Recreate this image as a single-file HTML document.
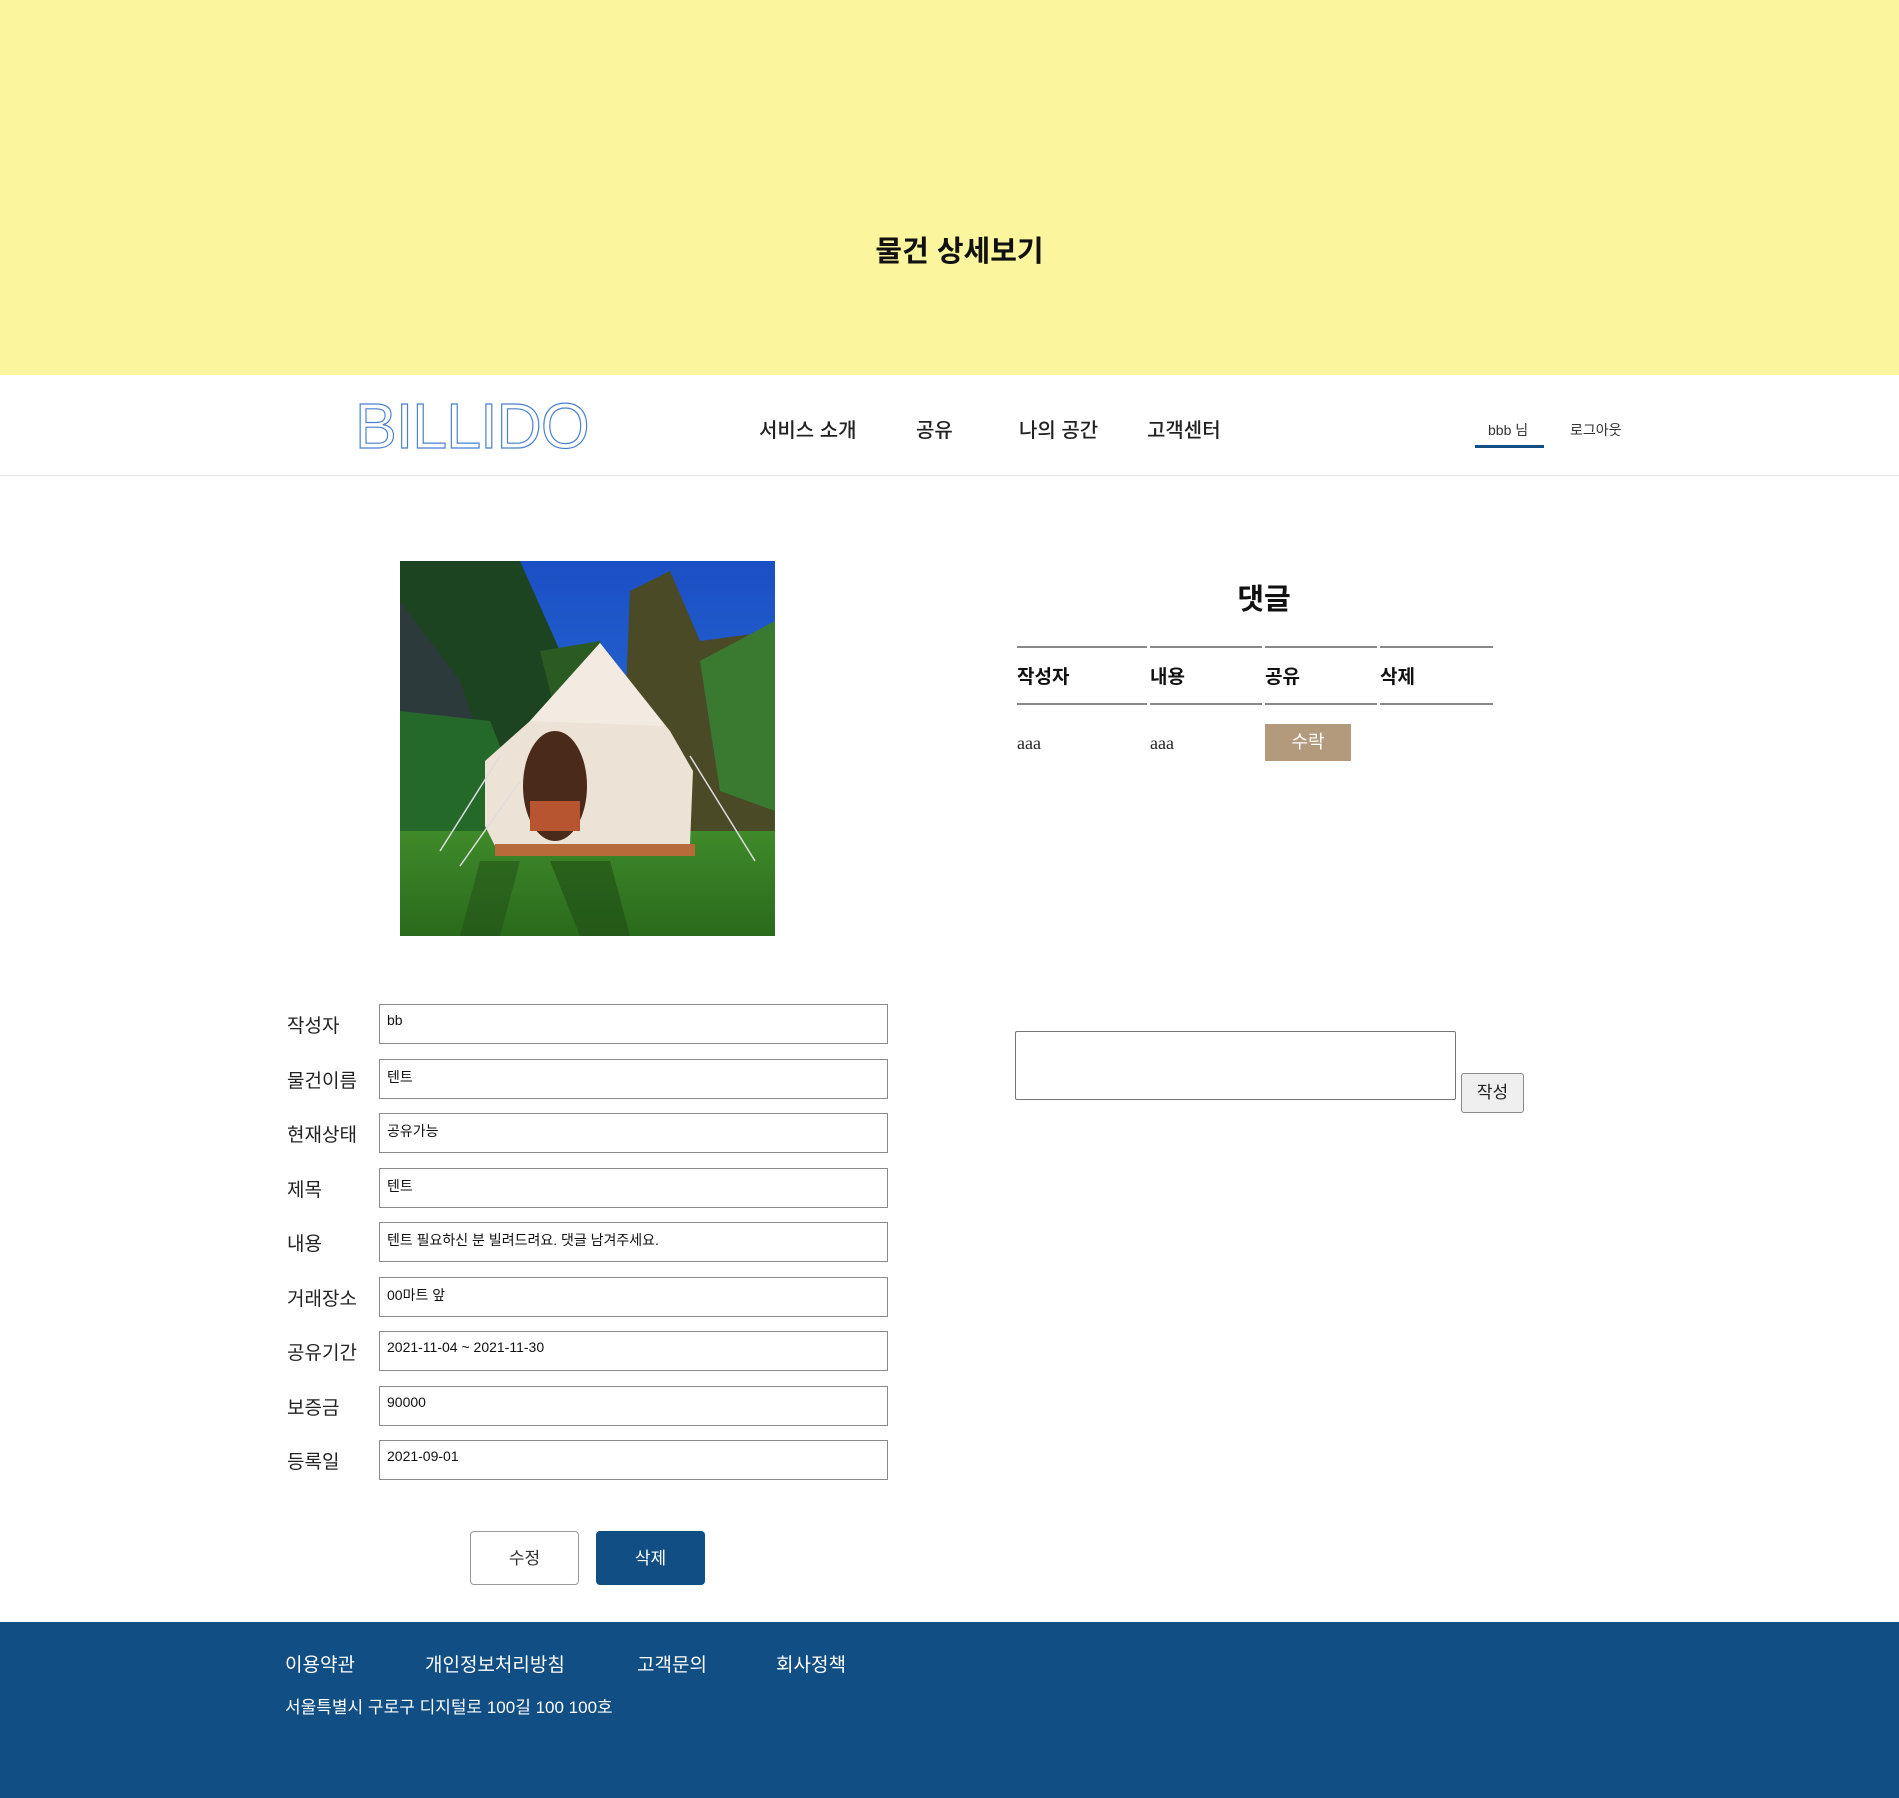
<!DOCTYPE html>
<html><head><meta charset="utf-8">
<style>
*{margin:0;padding:0;box-sizing:border-box}
body{width:1899px;height:1798px;position:relative;background:#fff;font-family:"Liberation Sans","Noto Sans CJK KR",sans-serif;color:#222;overflow:hidden}
.abs{position:absolute}
.top{left:0;top:0;width:1899px;height:375px;background:#fbf69d}
.title{left:10px;width:1899px;top:228px;text-align:center;font-size:29px;font-weight:700;color:#111}
.hdr{left:0;top:375px;width:1899px;height:101px;border-bottom:1px solid #e4e4e4}
.logo{left:355px;top:386px;font-family:"Liberation Sans",sans-serif;font-size:64px;line-height:80px;color:#fff;-webkit-text-stroke:1.2px #4a80d0;transform:scaleX(0.98);transform-origin:left;letter-spacing:-1px}
.nav{top:414px;font-size:20px;font-weight:500;color:#222;white-space:nowrap}
.small{top:420px;font-size:14px;color:#333}
.lbl{left:287px;font-size:19px;color:#222}
.inp{left:379px;width:509px;height:40px;border:1px solid #8a8a8a;font-size:14px;padding:7px 0 0 7px;color:#111}
.th{top:662px;font-size:19px;font-weight:700;color:#111}
.ln{height:2px;background:#888}
.foot{left:0;top:1622px;width:1899px;height:176px;background:#104e84;color:#fff}
.fl{top:1650px;font-size:19px;color:#fff}
</style></head><body>
<div class="abs top"></div>
<div class="abs title">물건 상세보기</div>
<div class="abs hdr"></div>
<div class="abs logo">BILLIDO</div>
<div class="abs nav" style="left:759px">서비스 소개</div>
<div class="abs nav" style="left:916px">공유</div>
<div class="abs nav" style="left:1019px">나의 공간</div>
<div class="abs nav" style="left:1147px">고객센터</div>
<div class="abs small" style="left:1488px">bbb 님</div>
<div class="abs" style="left:1475px;top:445px;width:69px;height:3px;background:#104e84"></div>
<div class="abs small" style="left:1570px">로그아웃</div>

<svg class="abs" style="left:400px;top:561px" width="375" height="375" viewBox="0 0 375 375">
<defs>
<linearGradient id="sky" x1="0" y1="0" x2="0" y2="1"><stop offset="0" stop-color="#1b4fc4"/><stop offset="1" stop-color="#2f7ee0"/></linearGradient>
<linearGradient id="grass" x1="0" y1="0" x2="0" y2="1"><stop offset="0" stop-color="#3f8a2a"/><stop offset="1" stop-color="#2a6a1c"/></linearGradient>
</defs>
<rect width="375" height="375" fill="url(#sky)"/>
<path d="M0 0 L120 0 L160 90 L185 240 L0 300Z" fill="#1d4420"/>
<path d="M0 40 L60 120 L80 180 L0 200Z" fill="#2c3a3c"/>
<path d="M0 150 L90 160 L130 260 L0 300Z" fill="#24692a"/>
<path d="M230 30 L270 10 L300 80 L375 70 L375 300 L220 280Z" fill="#4a4a26"/>
<path d="M300 100 L375 60 L375 250 L320 230Z" fill="#3a7a30"/>
<path d="M140 90 L200 80 L230 160 L160 170Z" fill="#2b5a22"/>
<rect y="270" width="375" height="105" fill="url(#grass)"/>
<path d="M150 300 L180 375 L230 375 L210 300Z" fill="#1f4d16" opacity=".6"/>
<path d="M80 300 L60 375 L100 375 L120 300Z" fill="#1f4d16" opacity=".5"/>
<path d="M200 82 L130 160 L85 200 L85 265 L95 285 L265 293 L290 283 L293 210 L270 170Z" fill="#ede2d6"/>
<path d="M200 82 L130 160 L265 165Z" fill="#f3ebe2"/>
<rect x="95" y="283" width="200" height="12" fill="#b86b3a"/>
<ellipse cx="155" cy="225" rx="32" ry="55" fill="#4a2a1a"/>
<rect x="130" y="240" width="50" height="30" fill="#b75530"/>
<path d="M100 195 L40 290 M290 195 L355 300 M120 220 L60 305" stroke="#ddd" stroke-width="1.5"/>
</svg>

<div class="abs" style="left:0;width:2528px;top:576px;font-size:29px;font-weight:700;color:#111;text-align:center">댓글</div>
<div class="abs ln" style="left:1017px;top:646px;width:130px"></div>
<div class="abs ln" style="left:1150px;top:646px;width:112px"></div>
<div class="abs ln" style="left:1265px;top:646px;width:112px"></div>
<div class="abs ln" style="left:1380px;top:646px;width:113px"></div>
<div class="abs ln" style="left:1017px;top:703px;width:130px"></div>
<div class="abs ln" style="left:1150px;top:703px;width:112px"></div>
<div class="abs ln" style="left:1265px;top:703px;width:112px"></div>
<div class="abs ln" style="left:1380px;top:703px;width:113px"></div>
<div class="abs th" style="left:1017px">작성자</div>
<div class="abs th" style="left:1150px">내용</div>
<div class="abs th" style="left:1265px">공유</div>
<div class="abs th" style="left:1380px">삭제</div>
<div class="abs" style="left:1017px;top:733px;font-size:18px;font-family:'Liberation Serif',serif">aaa</div>
<div class="abs" style="left:1150px;top:733px;font-size:18px;font-family:'Liberation Serif',serif">aaa</div>
<div class="abs" style="left:1265px;top:724px;width:86px;height:37px;background:#b39a7c;color:#fff;font-size:18px;text-align:center;line-height:37px">수락</div>

<div class="abs" style="left:1015px;top:1031px;width:441px;height:69px;border:1px solid #767676;border-radius:2px"></div>
<div class="abs" style="left:1461px;top:1073px;width:63px;height:40px;border:1px solid #8a8a8a;border-radius:3px;background:#efefef;font-size:17px;text-align:center;line-height:38px">작성</div>

<div class="abs lbl" style="top:1011px">작성자</div><div class="abs inp" style="top:1004px">bb</div>
<div class="abs lbl" style="top:1066px">물건이름</div><div class="abs inp" style="top:1059px">텐트</div>
<div class="abs lbl" style="top:1120px">현재상태</div><div class="abs inp" style="top:1113px">공유가능</div>
<div class="abs lbl" style="top:1175px">제목</div><div class="abs inp" style="top:1168px">텐트</div>
<div class="abs lbl" style="top:1229px">내용</div><div class="abs inp" style="top:1222px">텐트 필요하신 분 빌려드려요. 댓글 남겨주세요.</div>
<div class="abs lbl" style="top:1284px">거래장소</div><div class="abs inp" style="top:1277px">00마트 앞</div>
<div class="abs lbl" style="top:1338px">공유기간</div><div class="abs inp" style="top:1331px">2021-11-04 ~ 2021-11-30</div>
<div class="abs lbl" style="top:1393px">보증금</div><div class="abs inp" style="top:1386px">90000</div>
<div class="abs lbl" style="top:1447px">등록일</div><div class="abs inp" style="top:1440px">2021-09-01</div>

<div class="abs" style="left:470px;top:1531px;width:109px;height:54px;border:1px solid #999;border-radius:4px;font-size:17px;text-align:center;line-height:54px;color:#333">수정</div>
<div class="abs" style="left:596px;top:1531px;width:109px;height:54px;background:#104e84;border-radius:4px;font-size:17px;text-align:center;line-height:56px;color:#fff">삭제</div>

<div class="abs foot"></div>
<div class="abs fl" style="left:285px">이용약관</div>
<div class="abs fl" style="left:425px">개인정보처리방침</div>
<div class="abs fl" style="left:637px">고객문의</div>
<div class="abs fl" style="left:776px">회사정책</div>
<div class="abs" style="left:285px;top:1693px;font-size:17px;color:#fff">서울특별시 구로구 디지털로 100길 100 100호</div>
</body></html>
